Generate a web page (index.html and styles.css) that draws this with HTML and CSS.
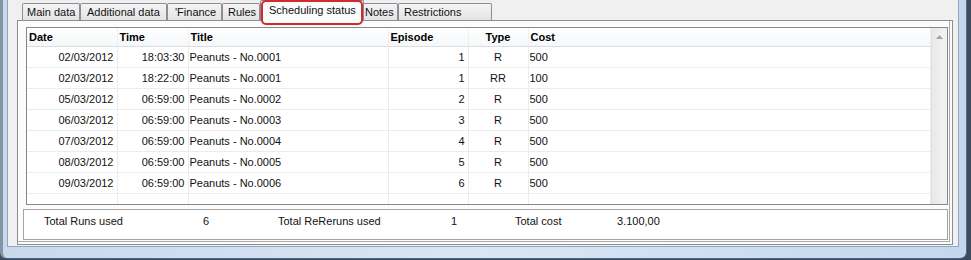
FILE: index.html
```html
<!DOCTYPE html>
<html lang="en">
  <head>
    <meta charset="UTF-8" />
    <title>Scheduling status</title>
    <link rel="stylesheet" href="styles.css">
  </head>
  <body>
    <div class="frame">
      <div class="client">
        <div class="tabctl">
          <div class="tabs">
            <div class="tab tab-main">Main data</div>
            <div class="tab tab-additional">Additional data</div>
            <div class="tab tab-finance">'Finance</div>
            <div class="tab tab-rules">Rules</div>
            <div class="tab active">
              Scheduling status
              <span class="mark"></span>
            </div>
            <div class="tab tab-notes">Notes</div>
            <div class="tab tab-last">Restrictions</div>
          </div>

          <div class="page">
            <div class="list">
              <div class="grid">
                <table>
                  <colgroup>
                    <col class="c-date" />
                    <col class="c-time" />
                    <col class="c-title" />
                    <col class="c-ep" />
                    <col class="c-type" />
                    <col />
                  </colgroup>
                  <thead>
                    <tr>
                      <th>Date</th>
                      <th>Time</th>
                      <th>Title</th>
                      <th>Episode</th>
                      <th class="mid">Type</th>
                      <th>Cost</th>
                    </tr>
                  </thead>
                  <tbody>
                    <tr>
                      <td class="num">02/03/2012</td>
                      <td class="num">18:03:30</td>
                      <td>Peanuts - No.0001</td>
                      <td class="num">1</td>
                      <td class="mid">R</td>
                      <td>500</td>
                    </tr>
                    <tr>
                      <td class="num">02/03/2012</td>
                      <td class="num">18:22:00</td>
                      <td>Peanuts - No.0001</td>
                      <td class="num">1</td>
                      <td class="mid">RR</td>
                      <td>100</td>
                    </tr>
                    <tr>
                      <td class="num">05/03/2012</td>
                      <td class="num">06:59:00</td>
                      <td>Peanuts - No.0002</td>
                      <td class="num">2</td>
                      <td class="mid">R</td>
                      <td>500</td>
                    </tr>
                    <tr>
                      <td class="num">06/03/2012</td>
                      <td class="num">06:59:00</td>
                      <td>Peanuts - No.0003</td>
                      <td class="num">3</td>
                      <td class="mid">R</td>
                      <td>500</td>
                    </tr>
                    <tr>
                      <td class="num">07/03/2012</td>
                      <td class="num">06:59:00</td>
                      <td>Peanuts - No.0004</td>
                      <td class="num">4</td>
                      <td class="mid">R</td>
                      <td>500</td>
                    </tr>
                    <tr>
                      <td class="num">08/03/2012</td>
                      <td class="num">06:59:00</td>
                      <td>Peanuts - No.0005</td>
                      <td class="num">5</td>
                      <td class="mid">R</td>
                      <td>500</td>
                    </tr>
                    <tr>
                      <td class="num">09/03/2012</td>
                      <td class="num">06:59:00</td>
                      <td>Peanuts - No.0006</td>
                      <td class="num">6</td>
                      <td class="mid">R</td>
                      <td>500</td>
                    </tr>
                    <tr class="empty">
                      <td></td><td></td><td></td><td></td><td></td><td></td>
                    </tr>
                  </tbody>
                </table>
              </div>
              <div class="vscroll">
                <div class="scroll-btn">
                  <svg width="7" height="4" viewBox="0 0 7 4">
                    <path d="M0 4 L3.5 0 L7 4 Z" fill="#a3a3a3" />
                  </svg>
                </div>
              </div>
            </div>

            <div class="totals">
              <span>Total Runs used</span>
              <span>6</span>
              <span>Total ReReruns used</span>
              <span>1</span>
              <span>Total cost</span>
              <span>3.100,00</span>
            </div>
          </div>
        </div>
      </div>
    </div>
  </body>
</html>
```

FILE: styles.css
```css
* {
  box-sizing: border-box;
}
body {
  margin: 0;
  width: 971px;
  height: 260px;
  overflow: hidden;
  background-color: #3d4b5e;
  font-family: "Liberation Sans", Arial, sans-serif;
  font-size: 11px;
  color: #111;
}
.frame {
  width: 967px;
  height: 259px;
  padding: 0 7px 11px 4px;
  background: linear-gradient(90deg, #c9d9ec, #d9e6f4 50%, #c4d7ed);
  border-left: 3px solid #8593a5;
  border-right: 1px solid #4f6a8c;
  border-bottom: 1px solid #4a6386;
  border-radius: 0 0 7px 7px;
}
.client {
  height: 100%;
  background-color: #f0f0f0;
  border: 1px solid #90a5be;
  border-top: none;
  padding: 0 5px 1px 9px;
}
.tabctl {
  height: 100%;
  display: flex;
  flex-direction: column;
}
.tabs {
  display: flex;
  align-items: flex-end;
  height: 20px;
  padding-left: 5px;
  position: relative;
  z-index: 1;
}
.tab {
  flex: none;
  height: 17px;
  line-height: 16px;
  border: 1px solid #8c8e94;
  border-bottom: none;
  border-radius: 2px 2px 0 0;
  background: linear-gradient(#f4f4f4, #e4e4e4);
  white-space: nowrap;
}
.tab-main {
  width: 58px;
  padding-left: 4px;
}
.tab-additional {
  width: 87px;
  padding-left: 6px;
}
.tab-finance {
  width: 55px;
  padding-left: 7px;
}
.tab-rules {
  width: 38px;
  padding-left: 5px;
}
.tab-notes {
  width: 35px;
  padding-left: 1px;
}
.tab-last {
  width: 94px;
  padding-left: 5px;
}
.tab.active {
  position: relative;
  width: 104px;
  height: 21px;
  margin: 0 -1px -1px 0;
  padding-left: 8px;
  line-height: 18px;
  background: #fcfcfc;
}
.mark {
  position: absolute;
  left: 0;
  top: -1px;
  width: 102px;
  height: 25px;
  border: 2px solid #d12a31;
  border-radius: 5px;
  box-shadow: 0 0 1px rgba(209, 42, 49, 0.5);
}
.page {
  flex: 1;
  display: flex;
  flex-direction: column;
  gap: 4px;
  padding: 6px 4px 0 5px;
  background-color: #fcfcfc;
  border: 1px solid #8c8e94;
  box-shadow: inset -2px -2px 0 #fcfcfc, inset -3px -3px 0 #a9a9a9;
}
.list {
  display: flex;
  height: 178px;
  margin-left: 3px;
  background-color: #fff;
  border: 1px solid #828790;
  overflow: hidden;
}
.grid {
  flex: 1;
  overflow: hidden;
}
table {
  width: 100%;
  table-layout: fixed;
  border-collapse: collapse;
}
.c-date {
  width: 90px;
}
.c-time {
  width: 71px;
}
.c-title {
  width: 200px;
}
.c-ep {
  width: 80px;
}
.c-type {
  width: 60px;
}
th {
  height: 18px;
  padding: 0 2px;
  text-align: left;
  font-weight: bold;
  color: #000;
  background: linear-gradient(#ffffff, #f6f7f9);
  border-bottom: 1px solid #dcdde0;
  border-right: 1px solid #f0f0f0;
}
td {
  height: 21px;
  padding: 0 1px 0 1px;
  border-right: 1px solid #ececec;
  border-bottom: 1px solid #ececec;
  white-space: nowrap;
}
td.num {
  text-align: right;
  padding-right: 3px;
}
.mid {
  text-align: center;
}
th.mid {
  text-align: center;
}
.vscroll {
  width: 16px;
  background: linear-gradient(90deg, #e9e9e9, #f3f3f3);
  border-left: 1px solid #e2e2e2;
}
.scroll-btn {
  height: 17px;
  display: flex;
  align-items: center;
  justify-content: center;
}
.totals {
  display: grid;
  grid-template-columns: 159px 75px 173px 64px 102px auto;
  height: 31px;
  padding: 5px 0 0 20px;
  line-height: 13px;
  background-color: #fff;
  border: 1px solid #a3a3a3;
}
```
